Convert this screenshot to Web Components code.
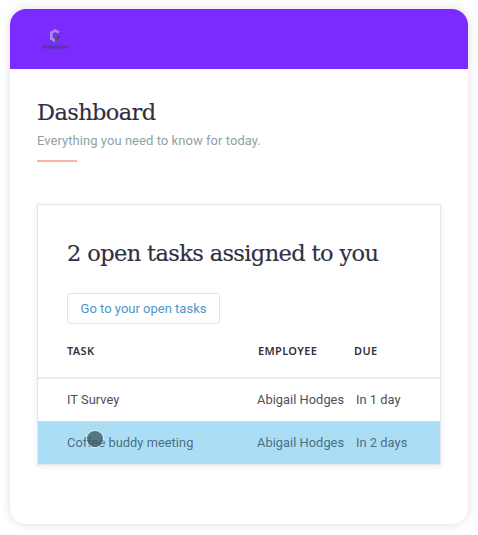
<!DOCTYPE html>
<html>
<head>
<meta charset="utf-8">
<style>
  html, body { margin: 0; padding: 0; background: #fff; }
  body { font-family: Roboto, "Noto Sans", sans-serif; }
</style>
</head>
<body>
<app-window>
  <brand-logo slot="header"></brand-logo>
  <page-title heading="Dashboard" sub="Everything you need to know for today."></page-title>
  <task-card heading="2 open tasks assigned to you" action="Go to your open tasks">
    <task-row slot="rows" task="IT Survey" employee="Abigail Hodges" due="In 1 day"></task-row>
    <task-row slot="rows" task="Coffee buddy meeting" employee="Abigail Hodges" due="In 2 days" selected></task-row>
  </task-card>
</app-window>

<script>
  class AppWindow extends HTMLElement {
    constructor() {
      super();
      this.attachShadow({ mode: 'open' });
      this.shadowRoot.innerHTML = `
        <style>
          :host { display: block; padding: 9px 10px 11px; height: 515px; }
          .window {
            height: 515px;
            box-sizing: border-box;
            border-radius: 16px;
            background: #fff;
            box-shadow: 0 0 10px rgba(40, 40, 70, 0.16);
            overflow: hidden;
          }
          header {
            height: 60px;
            background: #7b2bff;
            display: flex;
            align-items: flex-start;
            padding: 18px 0 0 30px;
            box-sizing: border-box;
          }
          main { padding: 28px 27px 0; }
        </style>
        <div class="window">
          <header><slot name="header"></slot></header>
          <main><slot></slot></main>
        </div>
      `;
    }
  }

  class BrandLogo extends HTMLElement {
    constructor() {
      super();
      this.attachShadow({ mode: 'open' });
      this.shadowRoot.innerHTML = `
        <style>
          :host { display: block; width: 30px; height: 24px; }
          svg { display: block; filter: blur(0.6px); }
        </style>
        <svg width="30" height="24" viewBox="0 0 30 24">
          <path d="M15 2 L20 4.5 L18 6.5 L15 5 L12.6 6.5 V10.5 L15 12 L16.6 11 L15.6 9.5 L20 9 V12 L15 15.5 L10 12.5 V5 Z" fill="#a48fdc"/>
          <path d="M15.5 9 L20 8.6 V12 L15 15.5 L15 12 Z" fill="#5a468f"/>
          <rect x="2" y="18.5" width="26" height="3" rx="1" fill="#5a35a8"/>
        </svg>
      `;
    }
  }

  class PageTitle extends HTMLElement {
    constructor() {
      super();
      this.attachShadow({ mode: 'open' });
      this.shadowRoot.innerHTML = `
        <style>
          :host { display: block; }
          h1 {
            margin: 0;
            font: 400 22.5px/30px "DejaVu Serif", serif;
            letter-spacing: -0.62px;
            -webkit-text-stroke: 0.15px #2f2f42;
            color: #2f2f42;
          }
          p {
            margin: 5px 0 0;
            font: 400 13px/18px Roboto, sans-serif;
            letter-spacing: 0.05px;
            color: #8ea3a6;
          }
          .rule {
            margin-top: 10px;
            width: 40px;
            height: 2px;
            background: #f8b4a0;
          }
        </style>
        <h1>${this.getAttribute('heading')}</h1>
        <p>${this.getAttribute('sub')}</p>
        <div class="rule"></div>
      `;
    }
  }

  class TaskCard extends HTMLElement {
    constructor() {
      super();
      this.attachShadow({ mode: 'open' });
      this.shadowRoot.innerHTML = `
        <style>
          :host {
            display: block;
            margin-top: 42px;
            background: #fff;
            border: 1px solid #e4e6ec;
            box-shadow: 0 1px 5px rgba(40, 40, 70, 0.1);
            width: 402px;
          }
          .top { padding: 33px 29px 0; }
          h2 {
            margin: 0;
            font: 400 22.5px/30px "DejaVu Serif", serif;
            letter-spacing: -0.62px;
            -webkit-text-stroke: 0.15px #2f2f42;
            color: #2f2f42;
          }
          .btn {
            display: inline-block;
            margin-top: 25px;
            box-sizing: border-box;
            height: 31px;
            width: 153px;
            border: 1px solid #dfe5ea;
            border-radius: 3px;
            text-align: center;
            font: 400 13px/29px Roboto, sans-serif;
            color: #4b97c9;
          }
          .head {
            display: grid;
            grid-template-columns: 191px 96px 1fr;
            height: 55px;
            padding: 0 0 0 29px;
            box-sizing: border-box;
            align-items: center;
            border-bottom: 2px solid #e9eef1;
            font: 600 11px/14px "Noto Sans", sans-serif;
            letter-spacing: 0.35px;
            color: #33333f;
          }
        </style>
        <div class="top">
          <h2>${this.getAttribute('heading')}</h2>
          <a class="btn">${this.getAttribute('action')}</a>
        </div>
        <div class="head"><span>TASK</span><span>EMPLOYEE</span><span>DUE</span></div>
        <slot name="rows"></slot>
      `;
    }
  }

  class TaskRow extends HTMLElement {
    constructor() {
      super();
      this.attachShadow({ mode: 'open' });
      const selected = this.hasAttribute('selected');
      this.shadowRoot.innerHTML = `
        <style>
          :host { display: block; position: relative; }
          .row {
            display: grid;
            grid-template-columns: 190px 99px 1fr;
            height: 42px;
            padding: 0 0 0 29px;
            box-sizing: border-box;
            align-items: center;
            font: 400 12.8px/18px Roboto, sans-serif;
            letter-spacing: 0.05px;
            color: #4a4f5c;
          }
          .row.selected {
            height: 43px;
            background: #abdef4;
            color: #4a6f86;
            border-top: 1px solid #c5dfec;
          }
          .dot {
            position: absolute;
            left: 49px;
            top: 10px;
            width: 16px;
            height: 16px;
            border-radius: 50%;
            background: rgba(60, 90, 100, 0.78);
            box-shadow: 0 0 0 1px rgba(235, 245, 250, 0.7);
          }
        </style>
        <div class="row ${selected ? 'selected' : ''}">
          <span>${this.getAttribute('task')}</span>
          <span>${this.getAttribute('employee')}</span>
          <span>${this.getAttribute('due')}</span>
        </div>
        ${selected ? '<div class="dot"></div>' : ''}
      `;
    }
  }

  customElements.define('app-window', AppWindow);
  customElements.define('brand-logo', BrandLogo);
  customElements.define('page-title', PageTitle);
  customElements.define('task-card', TaskCard);
  customElements.define('task-row', TaskRow);
</script>
</body>
</html>
